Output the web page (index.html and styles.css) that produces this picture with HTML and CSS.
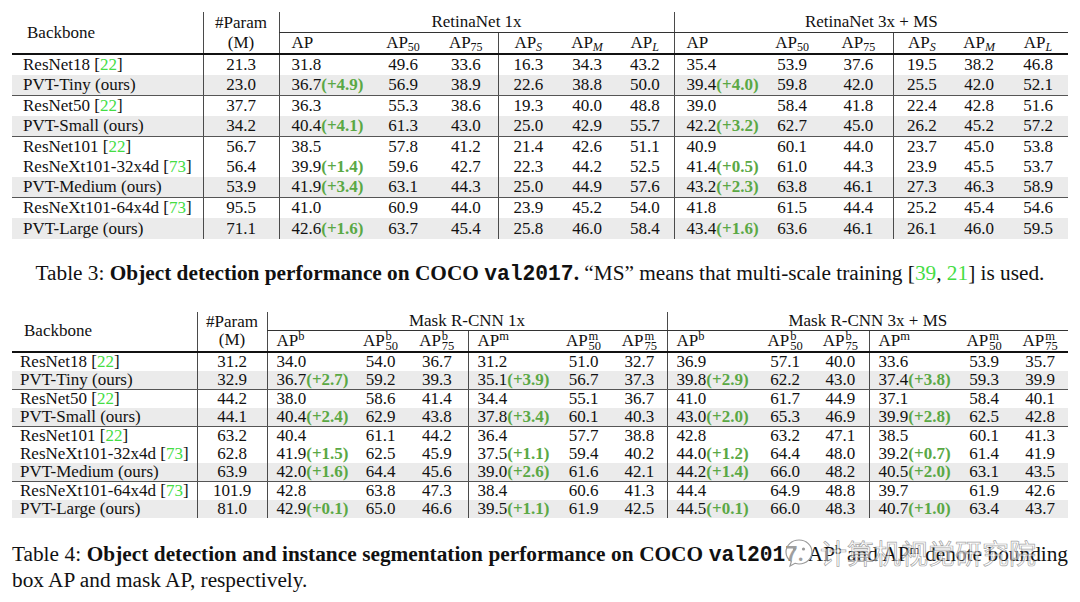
FILE: index.html
```html
<!DOCTYPE html>
<html lang="en">
<head>
<meta charset="utf-8">
<title>PVT detection tables</title>
<link rel="stylesheet" href="styles.css">
</head>
<body>
<main class="page">
<table class="t t1">
<colgroup>
<col class="w191 vr"><col class="w76 vr"><col class="w93"><col class="w62"><col class="w64 vr"><col class="w60"><col class="w58"><col class="w58 vr"><col class="w86"><col class="w64"><col class="w69 vr"><col class="w57"><col class="w58"><col class="w60">
</colgroup>
<thead>
<tr class="h1">
<th rowspan="2" class="bk rb">Backbone</th>
<th rowspan="2" class="pm rb">#Param<br>(M)</th>
<th colspan="6" class="grp">RetinaNet 1x</th>
<th colspan="6" class="grp">RetinaNet 3x + MS</th>
</tr>
<tr class="h2">
<th class="lf">AP</th><th>AP<sub>50</sub></th><th>AP<sub>75</sub></th><th>AP<sub class="it">S</sub></th><th>AP<sub class="it">M</sub></th><th>AP<sub class="it">L</sub></th>
<th class="lf">AP</th><th>AP<sub>50</sub></th><th>AP<sub>75</sub></th><th>AP<sub class="it">S</sub></th><th>AP<sub class="it">M</sub></th><th>AP<sub class="it">L</sub></th>
</tr>
</thead>
<tbody>
<tr><td>ResNet18 [<span class="ref">22</span>]</td><td>21.3</td><td>31.8</td><td>49.6</td><td>33.6</td><td>16.3</td><td>34.3</td><td>43.2</td><td>35.4</td><td>53.9</td><td>37.6</td><td>19.5</td><td>38.2</td><td>46.8</td></tr>
<tr class="ours"><td>PVT-Tiny (ours)</td><td>23.0</td><td>36.7<b class="g">(+4.9)</b></td><td>56.9</td><td>38.9</td><td>22.6</td><td>38.8</td><td>50.0</td><td>39.4<b class="g">(+4.0)</b></td><td>59.8</td><td>42.0</td><td>25.5</td><td>42.0</td><td>52.1</td></tr>
<tr class="sep"><td>ResNet50 [<span class="ref">22</span>]</td><td>37.7</td><td>36.3</td><td>55.3</td><td>38.6</td><td>19.3</td><td>40.0</td><td>48.8</td><td>39.0</td><td>58.4</td><td>41.8</td><td>22.4</td><td>42.8</td><td>51.6</td></tr>
<tr class="ours"><td>PVT-Small (ours)</td><td>34.2</td><td>40.4<b class="g">(+4.1)</b></td><td>61.3</td><td>43.0</td><td>25.0</td><td>42.9</td><td>55.7</td><td>42.2<b class="g">(+3.2)</b></td><td>62.7</td><td>45.0</td><td>26.2</td><td>45.2</td><td>57.2</td></tr>
<tr class="sep"><td>ResNet101 [<span class="ref">22</span>]</td><td>56.7</td><td>38.5</td><td>57.8</td><td>41.2</td><td>21.4</td><td>42.6</td><td>51.1</td><td>40.9</td><td>60.1</td><td>44.0</td><td>23.7</td><td>45.0</td><td>53.8</td></tr>
<tr><td>ResNeXt101-32x4d [<span class="ref">73</span>]</td><td>56.4</td><td>39.9<b class="g">(+1.4)</b></td><td>59.6</td><td>42.7</td><td>22.3</td><td>44.2</td><td>52.5</td><td>41.4<b class="g">(+0.5)</b></td><td>61.0</td><td>44.3</td><td>23.9</td><td>45.5</td><td>53.7</td></tr>
<tr class="ours"><td>PVT-Medium (ours)</td><td>53.9</td><td>41.9<b class="g">(+3.4)</b></td><td>63.1</td><td>44.3</td><td>25.0</td><td>44.9</td><td>57.6</td><td>43.2<b class="g">(+2.3)</b></td><td>63.8</td><td>46.1</td><td>27.3</td><td>46.3</td><td>58.9</td></tr>
<tr class="sep"><td>ResNeXt101-64x4d [<span class="ref">73</span>]</td><td>95.5</td><td>41.0</td><td>60.9</td><td>44.0</td><td>23.9</td><td>45.2</td><td>54.0</td><td>41.8</td><td>61.5</td><td>44.4</td><td>25.2</td><td>45.4</td><td>54.6</td></tr>
<tr class="ours"><td>PVT-Large (ours)</td><td>71.1</td><td>42.6<b class="g">(+1.6)</b></td><td>63.7</td><td>45.4</td><td>25.8</td><td>46.0</td><td>58.4</td><td>43.4<b class="g">(+1.6)</b></td><td>63.6</td><td>46.1</td><td>26.1</td><td>46.0</td><td>59.5</td></tr>
</tbody>
</table>

<p class="cap cap3">Table 3: <b>Object detection performance on COCO <code>val2017</code>.</b> “MS” means that multi-scale training [<span class="ref">39</span>, <span class="ref">21</span>] is used.</p>

<table class="t t2">
<colgroup>
<col class="w185 vr"><col class="w70 vr"><col class="w88"><col class="w51"><col class="w62 vr"><col class="w87"><col class="w57"><col class="w55 vr"><col class="w91"><col class="w54"><col class="w57 vr"><col class="w87"><col class="w56"><col class="w56">
</colgroup>
<thead>
<tr class="h1">
<th rowspan="2" class="bk rb">Backbone</th>
<th rowspan="2" class="pm rb">#Param<br>(M)</th>
<th colspan="6" class="grp">Mask R-CNN 1x</th>
<th colspan="6" class="grp">Mask R-CNN 3x + MS</th>
</tr>
<tr class="h2">
<th class="lf">AP<sup>b</sup></th><th>AP<span class="ss"><span>b</span><span>50</span></span></th><th>AP<span class="ss"><span>b</span><span>75</span></span></th>
<th class="lf">AP<sup>m</sup></th><th>AP<span class="ss"><span>m</span><span>50</span></span></th><th>AP<span class="ss"><span>m</span><span>75</span></span></th>
<th class="lf">AP<sup>b</sup></th><th>AP<span class="ss"><span>b</span><span>50</span></span></th><th>AP<span class="ss"><span>b</span><span>75</span></span></th>
<th class="lf">AP<sup>m</sup></th><th>AP<span class="ss"><span>m</span><span>50</span></span></th><th>AP<span class="ss"><span>m</span><span>75</span></span></th>
</tr>
</thead>
<tbody>
<tr><td>ResNet18 [<span class="ref">22</span>]</td><td>31.2</td><td>34.0</td><td>54.0</td><td>36.7</td><td>31.2</td><td>51.0</td><td>32.7</td><td>36.9</td><td>57.1</td><td>40.0</td><td>33.6</td><td>53.9</td><td>35.7</td></tr>
<tr class="ours"><td>PVT-Tiny (ours)</td><td>32.9</td><td>36.7<b class="g">(+2.7)</b></td><td>59.2</td><td>39.3</td><td>35.1<b class="g">(+3.9)</b></td><td>56.7</td><td>37.3</td><td>39.8<b class="g">(+2.9)</b></td><td>62.2</td><td>43.0</td><td>37.4<b class="g">(+3.8)</b></td><td>59.3</td><td>39.9</td></tr>
<tr class="sep"><td>ResNet50 [<span class="ref">22</span>]</td><td>44.2</td><td>38.0</td><td>58.6</td><td>41.4</td><td>34.4</td><td>55.1</td><td>36.7</td><td>41.0</td><td>61.7</td><td>44.9</td><td>37.1</td><td>58.4</td><td>40.1</td></tr>
<tr class="ours"><td>PVT-Small (ours)</td><td>44.1</td><td>40.4<b class="g">(+2.4)</b></td><td>62.9</td><td>43.8</td><td>37.8<b class="g">(+3.4)</b></td><td>60.1</td><td>40.3</td><td>43.0<b class="g">(+2.0)</b></td><td>65.3</td><td>46.9</td><td>39.9<b class="g">(+2.8)</b></td><td>62.5</td><td>42.8</td></tr>
<tr class="sep"><td>ResNet101 [<span class="ref">22</span>]</td><td>63.2</td><td>40.4</td><td>61.1</td><td>44.2</td><td>36.4</td><td>57.7</td><td>38.8</td><td>42.8</td><td>63.2</td><td>47.1</td><td>38.5</td><td>60.1</td><td>41.3</td></tr>
<tr><td>ResNeXt101-32x4d [<span class="ref">73</span>]</td><td>62.8</td><td>41.9<b class="g">(+1.5)</b></td><td>62.5</td><td>45.9</td><td>37.5<b class="g">(+1.1)</b></td><td>59.4</td><td>40.2</td><td>44.0<b class="g">(+1.2)</b></td><td>64.4</td><td>48.0</td><td>39.2<b class="g">(+0.7)</b></td><td>61.4</td><td>41.9</td></tr>
<tr class="ours"><td>PVT-Medium (ours)</td><td>63.9</td><td>42.0<b class="g">(+1.6)</b></td><td>64.4</td><td>45.6</td><td>39.0<b class="g">(+2.6)</b></td><td>61.6</td><td>42.1</td><td>44.2<b class="g">(+1.4)</b></td><td>66.0</td><td>48.2</td><td>40.5<b class="g">(+2.0)</b></td><td>63.1</td><td>43.5</td></tr>
<tr class="sep"><td>ResNeXt101-64x4d [<span class="ref">73</span>]</td><td>101.9</td><td>42.8</td><td>63.8</td><td>47.3</td><td>38.4</td><td>60.6</td><td>41.3</td><td>44.4</td><td>64.9</td><td>48.8</td><td>39.7</td><td>61.9</td><td>42.6</td></tr>
<tr class="ours"><td>PVT-Large (ours)</td><td>81.0</td><td>42.9<b class="g">(+0.1)</b></td><td>65.0</td><td>46.6</td><td>39.5<b class="g">(+1.1)</b></td><td>61.9</td><td>42.5</td><td>44.5<b class="g">(+0.1)</b></td><td>66.0</td><td>48.3</td><td>40.7<b class="g">(+1.0)</b></td><td>63.4</td><td>43.7</td></tr>
</tbody>
</table>

<div class="cap cap4">
<span class="line1">Table 4: <b>Object detection and instance segmentation performance on COCO <code>val2017</code>.</b> AP<sup>b</sup> and AP<sup>m</sup> denote bounding</span>
<span class="line2">box AP and mask AP, respectively.</span>
<div class="wm" aria-hidden="true">
<svg class="wm-icon" width="30" height="32" viewBox="0 0 30 32"><path d="M15 3 C7.5 3 2 8.5 2 15 C2 19 4 22.3 7.3 24.4 L6 29 L11 26.3 C12.3 26.7 13.6 27 15 27 C22.5 27 28 21.5 28 15 C28 8.5 22.5 3 15 3 Z" fill="rgba(255,255,255,0.6)" stroke="#9a9a9a" stroke-width="1.2"/><circle cx="10.5" cy="12" r="1.6" fill="#9a9a9a"/><circle cx="19.5" cy="12" r="1.6" fill="#9a9a9a"/></svg>
<span class="wm-text">计算机视觉研究院</span>
</div>
</div>
</main>
</body>
</html>
```

FILE: styles.css
```css
html, body {
  margin: 0;
  padding: 0;
  background: #ffffff;
}

.page {
  padding: 12px 12px 0 12px;
  color: #111;
  font-family: "Liberation Serif", "Times New Roman", serif;
}

/* ---------- tables ---------- */
.t {
  border-collapse: collapse;
  table-layout: fixed;
  width: 1056px;
  font-family: "Liberation Serif", "Times New Roman", serif;
  font-size: 17px;
  color: #111;
}

.t th,
.t td {
  padding: 0;
  white-space: nowrap;
  font-weight: normal;
  text-align: center;
  vertical-align: middle;
  overflow: visible;
}

.vr { border-right: 1px solid #4a4a4a; }

.w191 { width: 191px; } .w76 { width: 76px; } .w93 { width: 93px; } .w62 { width: 62px; }
.w64 { width: 64px; } .w60 { width: 60px; } .w58 { width: 58px; } .w86 { width: 86px; }
.w69 { width: 69px; } .w57 { width: 57px; } .w185 { width: 185px; } .w70 { width: 70px; }
.w88 { width: 88px; } .w51 { width: 51px; } .w87 { width: 87px; } .w55 { width: 55px; }
.w91 { width: 91px; } .w54 { width: 54px; } .w56 { width: 56px; }

.t .grp { border-bottom: 1px solid #333; }
.t .rb { border-bottom: 2px solid #111; }
.t .h2 th { border-bottom: 2px solid #111; }
.t .bk { text-align: left; }
.t .lf { text-align: left; }

.t tr.sep td { border-top: 1px solid #555; }
.t tr.ours td { background: #ebebeb; }

.t sub {
  font-size: 12px;
  line-height: 0;
  vertical-align: -3px;
}
.t sub.it { font-style: italic; }

.t sup {
  font-size: 12.5px;
  line-height: 0;
  vertical-align: 6px;
}

.ss {
  display: inline-flex;
  flex-direction: column;
  font-size: 12.5px;
  line-height: 10px;
  vertical-align: 6px;
  margin: -6px 0 -6px 1px;
  text-align: left;
}

.g {
  color: #5aa845;
  font-weight: bold;
}

.ref { color: #44dd44; }

/* table 1 metrics */
.t1 .h1 th { height: 20px; line-height: 20px; }
.t1 .h2 th { height: 20px; line-height: 20px; }
.t1 .bk { padding-left: 15px; }
.t1 .pm { line-height: 20px; }
.t1 tbody tr { height: 20.44px; }
.t1 td { line-height: 20px; }
.t1 td:nth-child(1) { text-align: left; padding-left: 11px; }
.t1 td:nth-child(3),
.t1 td:nth-child(9) { text-align: left; padding-left: 12px; }
.t1 .h2 th:nth-child(1),
.t1 .h2 th:nth-child(7) { padding-left: 12px; }

/* table 2 metrics */
.t2 .h1 th { height: 18px; line-height: 18px; }
.t2 .h2 th { height: 20px; line-height: 20px; }
.t2 .bk { padding-left: 12px; }
.t2 .pm { line-height: 20px; }
.t2 tbody tr { height: 18.3px; }
.t2 td { line-height: 18px; }
.t2 td:nth-child(1) { text-align: left; padding-left: 8px; }
.t2 td:nth-child(3),
.t2 td:nth-child(6),
.t2 td:nth-child(9),
.t2 td:nth-child(12) { text-align: left; padding-left: 9px; }
.t2 .h2 th:nth-child(1),
.t2 .h2 th:nth-child(4),
.t2 .h2 th:nth-child(7),
.t2 .h2 th:nth-child(10) { padding-left: 9px; }

/* ---------- captions ---------- */
.cap {
  font-family: "Liberation Serif", "Times New Roman", serif;
  color: #111;
}
.cap code {
  font-family: "Liberation Mono", "Courier New", monospace;
  font-weight: bold;
}
.cap sup {
  font-size: 13px;
  line-height: 0;
  vertical-align: 7px;
}

.cap3 {
  margin: 23px 0 27px 0;
  text-align: center;
  font-size: 21.3px;
  line-height: 22px;
}

.cap4 {
  position: relative;
  margin: 24px 0 0 0;
  font-size: 21.3px;
  line-height: 25px;
}
.cap4 .line1 {
  display: block;
  white-space: nowrap;
  text-align: justify;
  text-align-last: justify;
}
.cap4 .line2 {
  display: block;
}

/* watermark overlay */
.wm {
  position: absolute;
  left: 772px;
  top: -5px;
  display: flex;
  align-items: center;
  gap: 6px;
  pointer-events: none;
}
.wm-text {
  font-family: "Noto Sans CJK SC", sans-serif;
  font-size: 27px;
  line-height: 32px;
  color: rgba(255, 255, 255, 0.55);
  -webkit-text-stroke: 0.7px rgba(130, 130, 130, 0.75);
  letter-spacing: 0;
}
```
